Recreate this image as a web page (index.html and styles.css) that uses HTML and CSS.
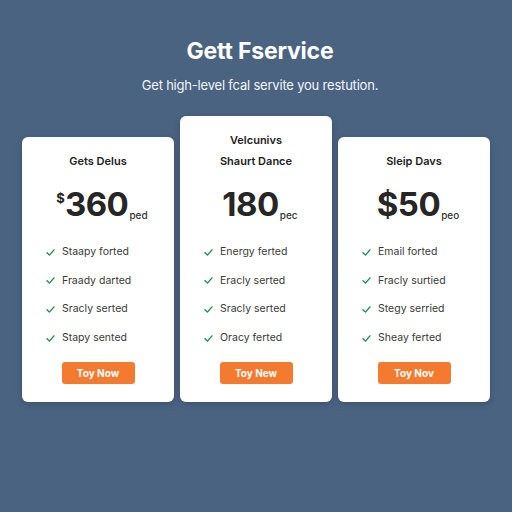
FILE: index.html
```html
<!DOCTYPE html>
<html>
<head>
<meta charset="utf-8">
<link rel="stylesheet" href="styles.css">
</head>
<body>
<main class="page">
  <header class="hero">
    <h1 class="hero-title">Gett Fservice</h1>
    <p class="hero-sub">Get high-level fcal servite you restution.</p>
  </header>
  <section class="plans">
    <article class="card">
      <h2 class="card-title">Gets Delus</h2>
      <div class="price"><span class="cur">$</span><span class="amount">360</span><span class="per">ped</span></div>
      <ul class="features">
        <li><svg class="check" viewBox="0 0 10 8"><path d="M1 4.2 L3.8 7 L9 1"/></svg>Staapy forted</li>
        <li><svg class="check" viewBox="0 0 10 8"><path d="M1 4.2 L3.8 7 L9 1"/></svg>Fraady darted</li>
        <li><svg class="check" viewBox="0 0 10 8"><path d="M1 4.2 L3.8 7 L9 1"/></svg>Sracly serted</li>
        <li><svg class="check" viewBox="0 0 10 8"><path d="M1 4.2 L3.8 7 L9 1"/></svg>Stapy sented</li>
      </ul>
      <button class="btn">Toy Now</button>
    </article>
    <article class="card">
      <h2 class="card-title">Velcunivs<br>Shaurt Dance</h2>
      <div class="price"><span class="amount">180</span><span class="per">pec</span></div>
      <ul class="features">
        <li><svg class="check" viewBox="0 0 10 8"><path d="M1 4.2 L3.8 7 L9 1"/></svg>Energy ferted</li>
        <li><svg class="check" viewBox="0 0 10 8"><path d="M1 4.2 L3.8 7 L9 1"/></svg>Eracly serted</li>
        <li><svg class="check" viewBox="0 0 10 8"><path d="M1 4.2 L3.8 7 L9 1"/></svg>Sracly serted</li>
        <li><svg class="check" viewBox="0 0 10 8"><path d="M1 4.2 L3.8 7 L9 1"/></svg>Oracy ferted</li>
      </ul>
      <button class="btn">Toy New</button>
    </article>
    <article class="card">
      <h2 class="card-title">Sleip Davs</h2>
      <div class="price"><span class="amount">$50</span><span class="per">peo</span></div>
      <ul class="features">
        <li><svg class="check" viewBox="0 0 10 8"><path d="M1 4.2 L3.8 7 L9 1"/></svg>Email forted</li>
        <li><svg class="check" viewBox="0 0 10 8"><path d="M1 4.2 L3.8 7 L9 1"/></svg>Fracly surtied</li>
        <li><svg class="check" viewBox="0 0 10 8"><path d="M1 4.2 L3.8 7 L9 1"/></svg>Stegy serried</li>
        <li><svg class="check" viewBox="0 0 10 8"><path d="M1 4.2 L3.8 7 L9 1"/></svg>Sheay ferted</li>
      </ul>
      <button class="btn">Toy Nov</button>
    </article>
  </section>
</main>
</body>
</html>
```

FILE: styles.css
```css
* { box-sizing: border-box; }
html, body { margin: 0; padding: 0; }
body {
  width: 512px;
  height: 512px;
  background: #4a6380;
  font-family: Inter, "Noto Sans", "Liberation Sans", sans-serif;
  overflow: hidden;
}
.page {
  display: flex;
  flex-direction: column;
  align-items: center;
}
.hero {
  display: flex;
  flex-direction: column;
  align-items: center;
  padding-top: 37px;
}
.hero-title {
  margin: 0 0 0 8px;
  font-size: 23px;
  line-height: 28px;
  font-weight: 700;
  color: #ffffff;
  letter-spacing: -0.2px;
}
.hero-sub {
  margin: 12px 0 0 8px;
  font-size: 13px;
  line-height: 16px;
  color: #f2f5f8;
  letter-spacing: -0.2px;
}
.plans {
  display: flex;
  align-items: flex-end;
  gap: 6px;
  margin-top: 23px;
}
.card {
  width: 152px;
  background: #ffffff;
  border-radius: 6px;
  box-shadow: 0 2px 6px rgba(20, 35, 55, 0.25);
  display: flex;
  flex-direction: column;
  align-items: center;
  padding: 14px 0 18px;
}
.card-title {
  margin: 0;
  font-size: 11px;
  line-height: 21px;
  font-weight: 600;
  color: #222;
  text-align: center;
}
.price {
  margin-top: 14px;
  height: 36px;
  display: flex;
  align-items: baseline;
  justify-content: center;
  color: #262626;
  padding-left: 8px;
}
.cur {
  font-size: 13px;
  font-weight: 700;
  align-self: flex-start;
  margin-top: 4px;
}
.amount {
  font-size: 33px;
  line-height: 36px;
  font-weight: 700;
  letter-spacing: -0.5px;
}
.per {
  font-size: 10px;
  font-weight: 500;
  color: #333;
  margin-left: 1px;
  transform: translateY(3px);
}
.features {
  list-style: none;
  margin: 21px 0 0;
  padding: 0 0 0 24px;
  align-self: stretch;
  display: flex;
  flex-direction: column;
  gap: 10.7px;
}
.features li {
  display: flex;
  align-items: center;
  font-size: 10.5px;
  line-height: 18px;
  color: #3a3a3a;
}
.check {
  width: 9px;
  height: 7px;
  margin-right: 7px;
  fill: none;
  stroke: #1f8a52;
  stroke-width: 1.6;
  stroke-linecap: round;
  stroke-linejoin: round;
}
.btn {
  margin-top: 15px;
  width: 73px;
  height: 22px;
  border: none;
  border-radius: 3px;
  background: #f47a30;
  color: #ffffff;
  font-family: inherit;
  font-size: 10px;
  font-weight: 700;
  padding: 0;
}
```
